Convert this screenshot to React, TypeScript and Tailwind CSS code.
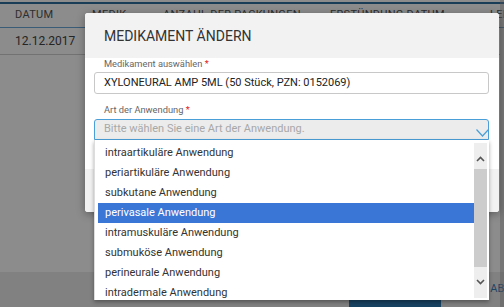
const options = [
  "intraartikuläre Anwendung",
  "periartikuläre Anwendung",
  "subkutane Anwendung",
  "perivasale Anwendung",
  "intramuskuläre Anwendung",
  "submuköse Anwendung",
  "perineurale Anwendung",
  "intradermale Anwendung",
];

export default function App() {
  return (
    <div className="relative w-[504px] h-[307px] overflow-hidden bg-white font-['Roboto',sans-serif]">
      {/* page behind the dialog */}
      <div className="flex flex-col h-full">
        <div className="h-[2px] bg-[#2f6f9e] mt-[2px]" />
        <div className="flex items-center h-[24px] pl-[15px] text-[11px] text-[#555] border-b border-[#6aa8d8] whitespace-nowrap tracking-wide">
          <span className="w-[77px] shrink-0">DATUM</span>
          <span className="w-[71px] shrink-0">MEDIK</span>
          <span className="w-[167px] shrink-0">ANZAHL DER PACKUNGEN</span>
          <span className="w-[160px] shrink-0">ERSTÜNDUNG DATUM</span>
          <span className="shrink-0">LEB</span>
        </div>
        <div className="flex items-center h-[27px] px-[15px] text-[12px] text-[#444] border-b border-[#cfcfcf] mr-[4px]">
          12.12.2017
        </div>
        <div className="flex-1" />
        <div className="h-[35px] bg-[#ebebeb] flex items-end justify-end whitespace-nowrap">
          <div className="w-[92px] h-[12px] bg-[#2a7bb3] mr-[49px] shrink-0" />
          <span className="text-[11px] text-[#3e7fb8] mb-[10px] -mr-[14px] shrink-0">ABBR</span>
        </div>
      </div>

      {/* backdrop */}
      <div className="absolute inset-0 bg-black/[0.45]" />
      <div className="absolute top-0 bottom-0 right-0 w-[4px] bg-[#555]/40" />

      {/* dialog */}
      <div className="absolute left-[85px] top-[13px] w-[414px] h-[199px] bg-white rounded-[3px] shadow-[0_2px_8px_rgba(0,0,0,0.35)] flex flex-col">
        <div className="h-[45px] bg-[#f2f2f2] rounded-t-[3px] flex items-center pl-[19px] pt-[2px] text-[14px] text-[#333]">
          MEDIKAMENT ÄNDERN
        </div>
        <div className="h-[111px] pl-[9px] pr-[10px]">
          <div className="pt-[0px] pl-[10px] text-[9.3px] text-[#666] leading-[12px]">
            Medikament auswählen <span className="text-[#e02020]">*</span>
          </div>
          <div className="mt-[2px] h-[22px] border border-[#c8c8c8] rounded-[3px] flex items-center pl-[9px] text-[11px] text-[#222]">
            XYLONEURAL AMP 5ML (50 Stück, PZN: 0152069)
          </div>
          <div className="mt-[10px] pl-[10px] text-[9.3px] text-[#666] leading-[12px]">
            Art der Anwendung <span className="text-[#e02020]">*</span>
          </div>
          <div className="relative mt-[3px]">
            <div className="h-[21px] bg-[#ececec] border border-[#4a9fd8] rounded-t-[3px] flex items-center pl-[9px] text-[11px] text-[#a8a8a8]">
              Bitte wählen Sie eine Art der Anwendung.
              <svg className="absolute right-0 top-[10px]" width="13" height="8" viewBox="0 0 13 8">
                <path d="M0.5 0.5 L6.5 7 L12.5 0.5" fill="none" stroke="#4a9fd8" strokeWidth="1.2" />
              </svg>
            </div>
            {/* open list */}
            <div className="absolute left-0 right-0 top-[21px] h-[160px] bg-white shadow-[0_2px_4px_rgba(0,0,0,0.35)] border-l border-[#ddd] z-10 flex pt-[3px] pl-[3px] overflow-hidden">
              <div className="flex-1 flex flex-col">
                {options.map((o, i) => (
                  <div
                    key={o}
                    className={`h-[20px] shrink-0 flex items-center pl-[7px] text-[11px] ${
                      i === 3 ? "bg-[#3a76d6] text-white" : "text-[#333]"
                    }`}
                  >
                    {o}
                  </div>
                ))}
              </div>
              <div className="w-[13px] h-[155px] bg-[#eeeeee] mr-[2px] flex flex-col items-center">
                <svg className="mt-[13px]" width="9" height="6" viewBox="0 0 9 6">
                  <path d="M1 5 L4.5 1.5 L8 5" fill="none" stroke="#555" strokeWidth="1.6" />
                </svg>
                <div className="w-full h-[98px] bg-[#cccccc] mt-[7px]" />
                <svg className="mt-[12px]" width="9" height="6" viewBox="0 0 9 6">
                  <path d="M1 1 L4.5 4.5 L8 1" fill="none" stroke="#555" strokeWidth="1.6" />
                </svg>
              </div>
            </div>
          </div>
        </div>
        <div className="flex-1 bg-[#f2f2f2] rounded-b-[3px]" />
      </div>
    </div>
  );
}
